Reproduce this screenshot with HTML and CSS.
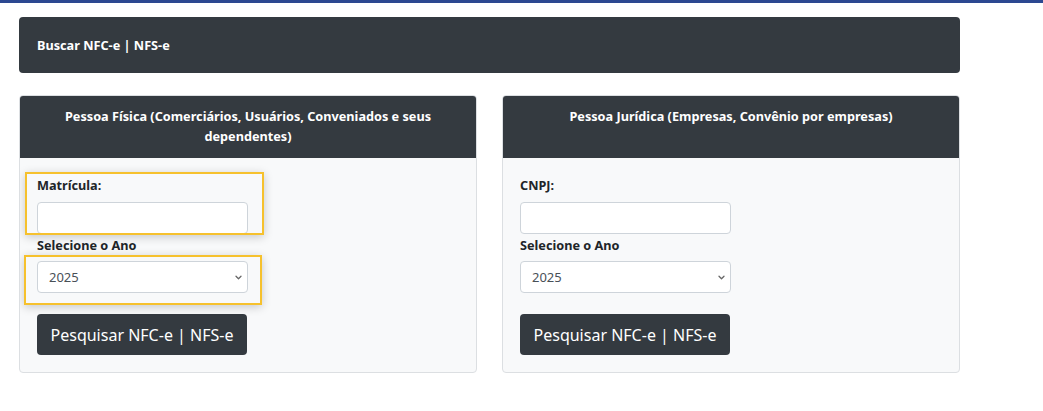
FILE: index.html
```html
<!DOCTYPE html>
<html lang="pt-BR">
<head>
    <meta charset="UTF-8">
    <meta name="viewport" content="width=device-width, initial-scale=1.0">
    <title>Buscar NFC-e | NFS-e</title>
    <link rel="stylesheet" href="styles.css">
</head>
<body>
    <div class="topbar"></div>

    <div class="container">
        <div class="page-title">Buscar NFC-e | NFS-e</div>

        <div class="row">
            <div class="card">
                <div class="card-header">Pessoa Física (Comerciários, Usuários, Conveniados e seus dependentes)</div>
                <div class="card-body">
                    <label for="matricula">Matrícula:</label>
                    <input type="text" id="matricula" class="form-control">
                    <label for="ano-pf" class="label-ano">Selecione o Ano</label>
                    <div class="select-wrap">
                        <select id="ano-pf" class="form-control">
                            <option>2025</option>
                            <option>2024</option>
                            <option>2023</option>
                        </select>
                        <svg class="chevron" width="7" height="5" viewBox="0 0 7 5"><path d="M1 1.2 3.5 3.7 6 1.2" fill="none" stroke="#666" stroke-width="1.3" stroke-linecap="round" stroke-linejoin="round"/></svg>
                    </div>
                    <button class="btn-dark">Pesquisar NFC-e | NFS-e</button>

                    <!-- destaque dos campos -->
                    <div class="highlight hl-matricula"></div>
                    <div class="highlight hl-ano"></div>
                </div>
            </div>

            <div class="card">
                <div class="card-header">Pessoa Jurídica (Empresas, Convênio por empresas)</div>
                <div class="card-body">
                    <label for="cnpj">CNPJ:</label>
                    <input type="text" id="cnpj" class="form-control">
                    <label for="ano-pj" class="label-ano">Selecione o Ano</label>
                    <div class="select-wrap">
                        <select id="ano-pj" class="form-control">
                            <option>2025</option>
                            <option>2024</option>
                            <option>2023</option>
                        </select>
                        <svg class="chevron" width="7" height="5" viewBox="0 0 7 5"><path d="M1 1.2 3.5 3.7 6 1.2" fill="none" stroke="#666" stroke-width="1.3" stroke-linecap="round" stroke-linejoin="round"/></svg>
                    </div>
                    <button class="btn-dark">Pesquisar NFC-e | NFS-e</button>
                </div>
            </div>
        </div>
    </div>
</body>
</html>
```

FILE: styles.css
```css
body {
    font-family: "Noto Sans", "Open Sans", sans-serif;
    margin: 0;
    background: #fff;
    color: #212529;
    min-height: 100vh;
}
.topbar {
    height: 3px;
    background: #2c4891;
}
.container {
    width: 941px;
    margin-left: 19px;
    padding-top: 14px;
}
.page-title {
    background: #343a40;
    color: #fff;
    border-radius: 4px;
    height: 56px;
    padding-left: 18px;
    display: flex;
    align-items: center;
    font-size: 12.7px;
    font-weight: bold;
}
.row {
    display: flex;
    gap: 25px;
    margin-top: 22px;
}
.card {
    width: 458px;
    border: 1px solid #dcdfe2;
    border-radius: 4px;
    background: #f8f9fa;
    overflow: hidden;
}
.card-header {
    background: #343a40;
    color: #fff;
    height: 62px;
    box-sizing: border-box;
    padding: 10px 36px 0;
    text-align: center;
    font-size: 12.7px;
    font-weight: bold;
    line-height: 20px;
}
.card-body {
    position: relative;
    display: flex;
    flex-direction: column;
    align-items: flex-start;
    padding: 18px 17px 17px;
}
label {
    font-size: 12.7px;
    font-weight: bold;
    line-height: 18px;
    margin-bottom: 8px;
}
.label-ano {
    margin-top: 2px;
    margin-bottom: 7px;
}
.form-control {
    box-sizing: border-box;
    width: 211px;
    height: 32px;
    border: 1px solid #ced4da;
    border-radius: 4px;
    background: #fff;
    font-family: inherit;
    font-size: 13px;
    color: #495057;
    padding: 0 11px;
    margin: 0;
}
.select-wrap {
    position: relative;
}
select.form-control {
    appearance: none;
    -webkit-appearance: none;
}
.chevron {
    position: absolute;
    right: 6px;
    top: 14px;
    pointer-events: none;
}
.btn-dark {
    margin-top: 21px;
    width: 210px;
    height: 41px;
    background: #343a40;
    color: #fff;
    border: none;
    border-radius: 4px;
    font-family: inherit;
    font-size: 16px;
    padding: 0;
    cursor: pointer;
}
.highlight {
    position: absolute;
    border: 2px solid #f6c12d;
    box-shadow: 0 2px 9px rgba(0,0,0,0.2);
    pointer-events: none;
}
.hl-matricula {
    left: 5px;
    top: 14px;
    width: 235px;
    height: 59px;
}
.hl-ano {
    left: 4px;
    top: 97px;
    width: 234px;
    height: 46px;
}
```
